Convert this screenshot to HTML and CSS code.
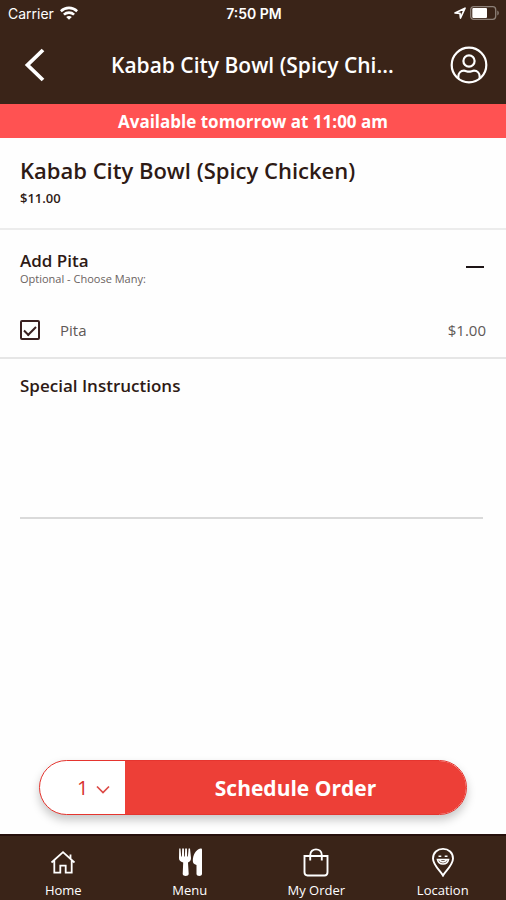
FILE: index.html
```html
<!DOCTYPE html>
<html lang="en">
<head>
<meta charset="utf-8">
<meta name="viewport" content="width=device-width, initial-scale=1">
<title>Kabab City Bowl (Spicy Chicken)</title>
<link rel="stylesheet" href="styles.css">
</head>
<body>
<header class="top">
  <div class="status">
    <div class="carrier">
      <span>Carrier</span>
      <svg width="18" height="14" viewBox="0 0 18 14" fill="none" stroke="#fff" stroke-width="2.600" aria-hidden="true"><path d="M.8 5.200c4.600-4.400 11.800-4.400 16.400 0M3.900 8.600c2.900-2.700 7.300-2.700 10.200 0"/><path d="M6.200 11c1.500-1.500 4.100-1.500 5.600 0L9 13.800z" fill="#fff" stroke="none"/></svg>
    </div>
    <span class="clock">7:50 PM</span>
    <div class="indicators">
      <svg width="12" height="12" viewBox="0 0 12 12" fill="none" stroke="#fff" stroke-width="1.700" stroke-linejoin="round" aria-hidden="true"><path d="M1 6 11 1.200 6.500 11 6 6.300z"/></svg>
      <svg width="30" height="14" viewBox="0 0 30 14" aria-hidden="true"><rect x=".7" y=".7" width="25" height="12.600" rx="3" fill="none" stroke="#8d8078" stroke-width="1.300"/><rect x="2.300" y="2" width="14.700" height="10" rx="1" fill="#fff"/><path d="M27.300 4.500c2 .8 2 4.200 0 5z" fill="#8d8078"/></svg>
    </div>
  </div>
  <div class="bar">
    <button class="icon-button" type="button" aria-label="Back">
      <svg width="22" height="34" viewBox="0 0 22 34" fill="none" stroke="#fff" stroke-width="3.800" aria-hidden="true"><path d="M19 2 3.500 17 19 32"/></svg>
    </button>
    <h1 class="bar-title">Kabab City Bowl (Spicy Chi...</h1>
    <button class="icon-button account" type="button" aria-label="Account">
      <svg width="38" height="38" viewBox="0 0 38 38" fill="none" stroke="#fff" stroke-width="2.200" aria-hidden="true"><circle cx="19" cy="19" r="17.300"/><circle cx="19" cy="15" r="5.600"/><path d="M8.300 32.500v-1.700c0-3.600 2.300-6.100 5.700-6.100 1.900 0 2.800 1 5 1s3.100-1 5-1c3.400 0 5.700 2.500 5.700 6.100v1.700"/></svg>
    </button>
  </div>
</header>
<p class="notice">Available tomorrow at 11:00 am</p>
<main class="content">
  <section class="item">
    <h2 class="item-name">Kabab City Bowl (Spicy Chicken)</h2>
    <p class="item-price">$11.00</p>
  </section>
  <section class="group">
    <div class="group-head">
      <div>
        <h3 class="label">Add Pita</h3>
        <p class="hint">Optional - Choose Many:</p>
      </div>
      <button class="collapse" type="button" aria-label="Collapse Add Pita"><span class="dash"></span></button>
    </div>
    <label class="option">
      <input class="check" type="checkbox" checked>
      <span class="option-name">Pita</span>
      <span>$1.00</span>
    </label>
  </section>
  <section class="notes">
    <label class="label" for="notes">Special Instructions</label>
    <textarea class="notes-field" id="notes"></textarea>
  </section>
</main>
<div class="order">
  <div class="quantity">
    <select class="quantity-select" aria-label="Quantity"><option>1</option><option>2</option><option>3</option></select>
    <svg class="chevron" width="14" height="10" viewBox="0 0 14 10" fill="none" stroke="#dc4a46" stroke-width="1.700" aria-hidden="true"><path d="m1 1.500 6 6 6-6"/></svg>
  </div>
  <button class="submit" type="button">Schedule Order</button>
</div>
<nav class="tabs">
  <a class="tab" href="#home">
    <svg width="28" height="30" viewBox="0 0 28 30" fill="none" stroke="#fff" stroke-width="1.800" aria-hidden="true"><path d="M2.500 15.500 14 5.200l11.500 10.300M21.500 11.500V7.500M5.300 13.500v12.200h6v-7h5.400v7h6V13.500"/></svg>
    <span>Home</span>
  </a>
  <a class="tab" href="#menu">
    <svg width="28" height="30" viewBox="0 0 28 30" fill="#fff" aria-hidden="true"><path d="M3.200 1.500h1.300l.7 8h.7l.3-8h1.700l.3 8h.7l.3-8h1.700l.3 8h.7l.7-8H14l1 9.500c.1 2.300-1 3.700-3 4.500l.7 11.500c0 2.500-6 2.500-6 0L7.200 15.500c-2.900-.8-4.400-2.200-4.200-4.500zM26 2.700v24.300c0 2.500-5.500 2.500-5.500 0V18c-2.600-.7-3.700-2-3.700-4.200C16.800 8 20 2.500 24.500 1.500c1-.2 1.500.3 1.500 1.200z"/></svg>
    <span>Menu</span>
  </a>
  <a class="tab" href="#order">
    <svg width="28" height="30" viewBox="0 0 28 30" fill="none" stroke="#fff" stroke-width="1.900" aria-hidden="true"><path d="M2.500 9h23v16.300c0 2-1 3.200-3 3.200h-17c-2 0-3-1.200-3-3.200zM8.200 13.500V8.200c0-7.800 11.600-7.800 11.600 0v5.300"/></svg>
    <span>My Order</span>
  </a>
  <a class="tab" href="#location">
    <svg width="28" height="30" viewBox="0 0 28 30" fill="none" stroke="#fff" stroke-width="1.900" aria-hidden="true"><path d="M14 28.500C12 24.500 4 18.200 4 11.500 4 5.800 8.400 1.900 14 1.900s10 3.900 10 9.600c0 6.700-8 13-10 17z"/><path d="M8.500 12.500c1.300 6 9.700 6 11 0zm2 .7c2 2.200 5 2.200 7 0M9.500 9.200h2.800M15.700 9.200h2.800" stroke-width="1.600"/></svg>
    <span>Location</span>
  </a>
</nav>
</body>
</html>
```
FILE: styles.css
```css
* {
  box-sizing: border-box;
}

body {
  margin: 0;
  min-height: 100vh;
  display: flex;
  flex-direction: column;
  background: #fefefe;
  color: #2e1a15;
  font-family: "Open Sans", "Noto Sans", sans-serif;
}

h1, h2, h3, p {
  margin: 0;
}

button, select, textarea {
  padding: 0;
  border: 0;
  background: none;
  color: inherit;
  font: inherit;
}

svg {
  display: block;
  flex: none;
}

.top {
  background: #3a2418;
  color: #fff;
}

.status {
  display: grid;
  grid-template-columns: 1fr auto 1fr;
  align-items: center;
  height: 26px;
  padding: 0 6px 0 8px;
  font-family: Inter, sans-serif;
  font-size: 14px;
}

.carrier, .indicators {
  display: flex;
  align-items: center;
  gap: 6px;
}

.indicators {
  justify-content: flex-end;
  gap: 4px;
}

.clock {
  font-weight: 600;
}

.bar {
  display: grid;
  grid-template-columns: 40px minmax(0, 290px) 40px;
  justify-content: space-between;
  align-items: center;
  height: 78px;
  padding: 0 18px 0 24px;
}

.bar-title {
  overflow: hidden;
  text-overflow: ellipsis;
  white-space: nowrap;
  font-size: 21px;
  line-height: 28px;
  font-weight: 600;
}

.account {
  justify-self: end;
}

.notice {
  height: 34px;
  background: #ff5252;
  color: #fff;
  font-size: 17px;
  line-height: 36px;
  font-weight: 700;
  text-align: center;
}

.content {
  flex: 1;
}

.item {
  padding: 18px 20px 20px;
  border-bottom: 2px solid #ececec;
}

.item-name {
  font-size: 22px;
  line-height: 28px;
  font-weight: 600;
}

.item-price {
  margin-top: 4px;
  font-size: 13px;
  line-height: 20px;
  font-weight: 600;
}

.group {
  padding: 20px 20px 16px;
  border-bottom: 2px solid #e6e6e6;
}

.group-head {
  display: flex;
  justify-content: space-between;
  align-items: flex-start;
}

.label {
  display: block;
  font-size: 17px;
  line-height: 22px;
  font-weight: 600;
}

.hint {
  color: #6a6260;
  font-size: 11px;
  line-height: 14px;
}

.collapse {
  display: flex;
  align-items: center;
  height: 34px;
  padding: 0 2px;
}

.dash {
  width: 18px;
  height: 2px;
  background: #1d1416;
}

.option {
  display: flex;
  align-items: center;
  margin-top: 33px;
  color: #5f5957;
  font-size: 15px;
  line-height: 22px;
}

.check {
  appearance: none;
  display: grid;
  place-items: center;
  width: 20px;
  height: 20px;
  margin: 0 20px 0 0;
  border: 2px solid #3a2020;
  border-radius: 2px;
}

.check:checked::before {
  content: "";
  width: 10px;
  height: 5px;
  border: solid #3a2020;
  border-width: 0 0 2px 2px;
  transform: translateY(-1px) rotate(-45deg);
}

.option-name {
  flex: 1;
}

.notes {
  padding: 16px 23px 0 20px;
}

.notes-field {
  display: block;
  width: 100%;
  height: 122px;
  border-bottom: 2px solid #dadada;
  resize: none;
}

.order {
  display: flex;
  height: 55px;
  margin: 0 39px 19px;
  overflow: hidden;
  border: 1px solid #e5352f;
  border-radius: 28px;
  background: #fff;
  box-shadow: 0 5px 10px rgba(0, 0, 0, 0.22);
}

.quantity {
  position: relative;
  flex: none;
  width: 85px;
  color: #d8312d;
}

.quantity-select {
  appearance: none;
  width: 100%;
  height: 100%;
  padding-left: 37px;
  font-size: 20px;
}

.chevron {
  position: absolute;
  top: 24px;
  right: 15px;
  pointer-events: none;
}

.submit {
  flex: 1;
  background: #ed3f37;
  color: #fff;
  font-size: 21px;
  font-weight: 700;
}

.tabs {
  display: grid;
  grid-template-columns: repeat(4, 1fr);
  height: 66px;
  border-top: 2px solid #26100c;
  background: #3a2418;
}

.tab {
  display: flex;
  flex-direction: column;
  align-items: center;
  padding-top: 11px;
  color: #fff;
  font-size: 13px;
  line-height: 26px;
  text-decoration: none;
}
```
